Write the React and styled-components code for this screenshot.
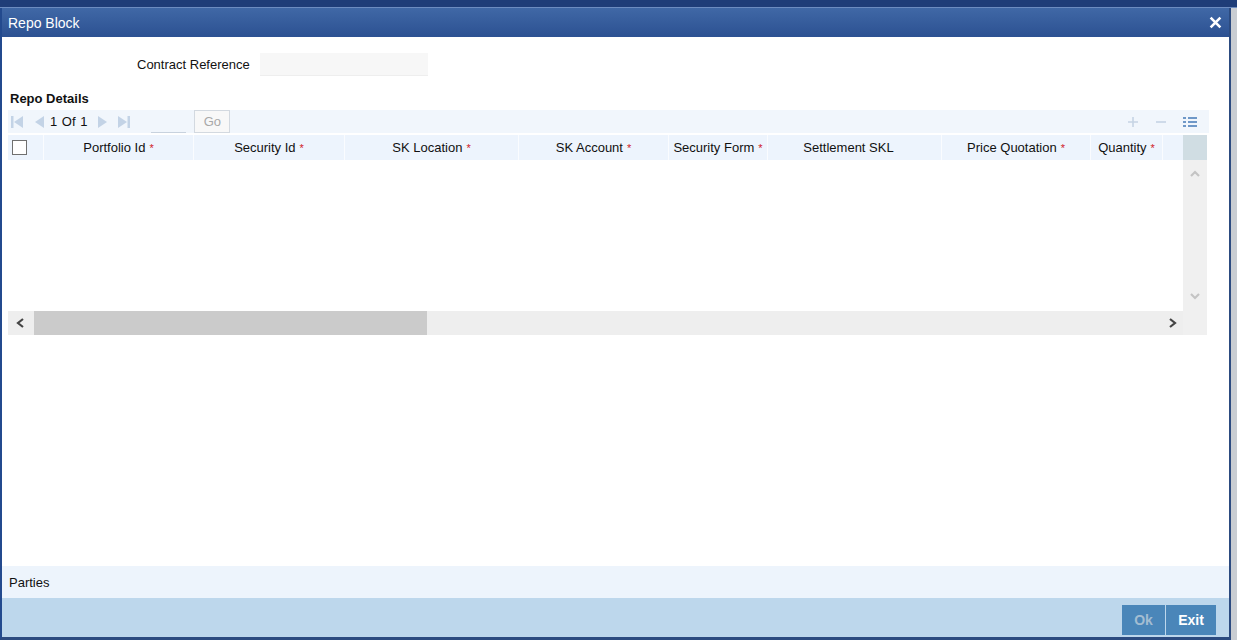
import React from "react";
import styled, { createGlobalStyle } from "styled-components";

const GlobalStyle = createGlobalStyle`
  html, body {
    margin: 0;
    padding: 0;
    width: 1237px;
    height: 640px;
    overflow: hidden;
    background: #c9cdd2;
    font-family: "Liberation Sans", Arial, sans-serif;
    font-size: 13px;
    color: #111;
  }
`;

const Page = styled.div`
  display: flex;
  flex-direction: column;
  height: 640px;
`;

const TopStrip = styled.div`
  height: 7px;
  background: #1f3d78;
  border-bottom: 1px solid #6d8cc0;
`;

const Row = styled.div`
  display: flex;
  flex: 1;
  min-height: 0;
`;

const Window = styled.div`
  width: 1227px;
  display: flex;
  flex-direction: column;
  border-left: 2px solid #234a8e;
  border-right: 2px solid #2c4b80;
  border-bottom: 3px solid #2c4b80;
  background: #fff;
`;

const Desktop = styled.div`
  flex: 1;
  background: #c9cdd2;
`;

const TitleBar = styled.div`
  height: 29px;
  display: flex;
  align-items: center;
  justify-content: space-between;
  padding: 0 7px 0 6px;
  background: linear-gradient(#4068a6, #2c5192);
  color: #fff;
  font-size: 14px;
`;

const Close = styled.span`
  display: flex;
  align-items: center;
`;

const Body = styled.div`
  flex: 1;
  display: flex;
  flex-direction: column;
  padding: 0 20px 0 6px;
`;

const FieldRow = styled.div`
  display: flex;
  align-items: center;
  height: 23px;
  margin-top: 16px;
  padding-left: 129px;
  gap: 10px;
`;

const Label = styled.span`
  color: #111;
`;

const ReadInput = styled.div`
  width: 168px;
  height: 23px;
  background: #f7f7f7;
  border-bottom: 1px solid #eee;
  box-sizing: border-box;
`;

const SectionTitle = styled.div`
  font-weight: bold;
  line-height: 15px;
  padding: 15px 0 4px 2px;
`;

const Toolbar = styled.div`
  height: 23px;
  display: flex;
  align-items: center;
  background: #f1f6fc;
  padding-left: 3px;
`;

const NavIcon = styled.svg`
  width: ${(p) => p.$w || 12}px;
  height: 12px;
  margin-right: ${(p) => p.$gap || 4}px;
  flex-shrink: 0;
`;

const PageText = styled.span`
  margin-right: 11px;
  word-spacing: 1px;
`;

const PageInput = styled.div`
  width: 35px;
  height: 21px;
  border-bottom: 1px solid #c8d2de;
  margin: 0 8px 0 17px;
  align-self: flex-end;
`;

const GoButton = styled.div`
  width: 34px;
  height: 21px;
  border: 1px solid #d3d9e0;
  background: #f8f8f8;
  color: #a8a8a8;
  display: flex;
  align-items: center;
  justify-content: center;
  align-self: flex-start;
`;

const ToolRight = styled.div`
  margin-left: auto;
  display: flex;
  align-items: center;
  gap: 16px;
  padding-right: 12px;
`;

const Grid = styled.div`
  display: grid;
  grid-template-columns: 1175px 24px;
  margin-top: 2px;
`;

const GridMain = styled.div`
  display: flex;
  flex-direction: column;
`;

const HeaderRow = styled.div`
  display: flex;
  height: 25px;
  background: #edf4fd;
`;

const HeadCell = styled.div`
  width: ${(p) => p.$w}px;
  display: flex;
  align-items: center;
  justify-content: center;
  padding-right: ${(p) => p.$pr || 0}px;
  border-right: 1px solid #fafcff;
  box-sizing: border-box;
  white-space: nowrap;
`;

const Star = styled.span`
  color: #d0182a;
  margin-left: 4px;
  font-size: 11px;
`;

const CheckBox = styled.div`
  width: 13px;
  height: 13px;
  border: 1px solid #707070;
  background: #fff;
  margin-right: 12px;
`;

const GridBody = styled.div`
  height: 151px;
`;

const HScroll = styled.div`
  height: 24px;
  display: flex;
  align-items: center;
  background: #eeeeee;
  margin-right: -2px;
`;

const ScrollArrow = styled.div`
  width: 26px;
  height: 24px;
  display: flex;
  align-items: center;
  justify-content: center;
`;

const Track = styled.div`
  flex: 1;
  height: 24px;
  display: flex;
`;

const Thumb = styled.div`
  width: 393px;
  height: 24px;
  background: #cbcbcb;
`;

const VScroll = styled.div`
  display: flex;
  flex-direction: column;
`;

const VHead = styled.div`
  height: 25px;
  background: #d0dde3;
`;

const VTrack = styled.div`
  height: 175px;
  background: #f0f0f0;
  display: flex;
  flex-direction: column;
  justify-content: space-between;
  align-items: center;
  padding: 8px 0 33px;
  box-sizing: border-box;
`;

const Spacer = styled.div`
  flex: 1;
`;

const PartiesBar = styled.div`
  height: 32px;
  display: flex;
  align-items: center;
  padding-left: 7px;
  background: #edf4fc;
`;

const ButtonBar = styled.div`
  height: 39px;
  display: flex;
  justify-content: flex-end;
  align-items: flex-end;
  padding-right: 13px;
  background: #bdd7ec;
`;

const ActionButton = styled.div`
  height: 30px;
  width: ${(p) => p.$w}px;
  display: flex;
  align-items: center;
  justify-content: center;
  background: #4a86b9;
  color: ${(p) => (p.$disabled ? "#a3bdd2" : "#fff")};
  font-weight: bold;
  font-size: 14px;
  margin-left: 1px;
  margin-bottom: 2px;
`;

const columns = [
  { w: 150, label: "Portfolio Id", req: true },
  { w: 151, label: "Security Id", req: true },
  { w: 174, label: "SK Location", req: true },
  { w: 150, label: "SK Account", req: true },
  { w: 99, label: "Security Form", req: true },
  { w: 174, label: "Settlement SKL", pr: 12 },
  { w: 149, label: "Price Quotation", req: true },
  { w: 72, label: "Quantity", req: true },
];

function Chevron({ dir, color = "#444" }) {
  const d = {
    left: "M8 2 L3 6 L8 10",
    right: "M4 2 L9 6 L4 10",
    up: "M2 8 L6 4 L10 8",
    down: "M2 4 L6 8 L10 4",
  }[dir];
  return (
    <svg width="12" height="12" viewBox="0 0 12 12">
      <path d={d} fill="none" stroke={color} strokeWidth="2.2" />
    </svg>
  );
}

export default function App() {
  return (
    <Page>
      <GlobalStyle />
      <TopStrip />
      <Row>
        <Window>
          <TitleBar>
            <span>Repo Block</span>
            <Close>
              <svg width="13" height="13" viewBox="0 0 12 12">
                <path d="M1.5 1.5 L10.5 10.5 M10.5 1.5 L1.5 10.5" stroke="#fff" strokeWidth="2.4" />
              </svg>
            </Close>
          </TitleBar>
          <Body>
            <FieldRow>
              <Label>Contract Reference</Label>
              <ReadInput />
            </FieldRow>
            <SectionTitle>Repo Details</SectionTitle>
            <Toolbar>
              <NavIcon viewBox="0 0 12 12" $gap={11}>
                <rect x="0" y="0" width="2.5" height="12" fill="#c3d3e6" />
                <path d="M12 0 L3 6 L12 12 Z" fill="#c3d3e6" />
              </NavIcon>
              <NavIcon viewBox="0 0 10 12" $w={10} $gap={6}>
                <path d="M10 0 L1 6 L10 12 Z" fill="#c3d3e6" />
              </NavIcon>
              <PageText>1 Of 1</PageText>
              <NavIcon viewBox="0 0 10 12" $w={10} $gap={10}>
                <path d="M0 0 L9 6 L0 12 Z" fill="#c3d3e6" />
              </NavIcon>
              <NavIcon viewBox="0 0 12 12">
                <path d="M0 0 L9 6 L0 12 Z" fill="#c3d3e6" />
                <rect x="9.5" y="0" width="2.5" height="12" fill="#c3d3e6" />
              </NavIcon>
              <PageInput />
              <GoButton>Go</GoButton>
              <ToolRight>
                <svg width="12" height="12" viewBox="0 0 12 12">
                  <path d="M6 1 V11 M1 6 H11" stroke="#c6d4e4" strokeWidth="1.6" />
                </svg>
                <svg width="12" height="12" viewBox="0 0 12 12">
                  <path d="M1 6 H11" stroke="#c6d4e4" strokeWidth="1.6" />
                </svg>
                <svg width="14" height="12" viewBox="0 0 14 12">
                  <g fill="#6f98c8">
                    <rect x="0" y="1" width="3" height="2" />
                    <rect x="5" y="1" width="9" height="2" />
                    <rect x="0" y="5" width="3" height="2" />
                    <rect x="5" y="5" width="9" height="2" />
                    <rect x="0" y="9" width="3" height="2" />
                    <rect x="5" y="9" width="9" height="2" />
                  </g>
                </svg>
              </ToolRight>
            </Toolbar>
            <Grid>
              <GridMain>
                <HeaderRow>
                  <HeadCell $w={36}>
                    <CheckBox />
                  </HeadCell>
                  {columns.map((c) => (
                    <HeadCell key={c.label} $w={c.w} $pr={c.pr}>
                      {c.label}
                      {c.req && <Star>*</Star>}
                    </HeadCell>
                  ))}
                </HeaderRow>
                <GridBody />
                <HScroll>
                  <ScrollArrow>
                    <Chevron dir="left" />
                  </ScrollArrow>
                  <Track>
                    <Thumb />
                  </Track>
                  <ScrollArrow>
                    <Chevron dir="right" />
                  </ScrollArrow>
                </HScroll>
              </GridMain>
              <VScroll>
                <VHead />
                <VTrack>
                  <Chevron dir="up" color="#c4c4c4" />
                  <Chevron dir="down" color="#c4c4c4" />
                </VTrack>
              </VScroll>
            </Grid>
            <Spacer />
          </Body>
          <PartiesBar>Parties</PartiesBar>
          <ButtonBar>
            <ActionButton $w={43} $disabled>Ok</ActionButton>
            <ActionButton $w={50}>Exit</ActionButton>
          </ButtonBar>
        </Window>
        <Desktop />
      </Row>
    </Page>
  );
}
